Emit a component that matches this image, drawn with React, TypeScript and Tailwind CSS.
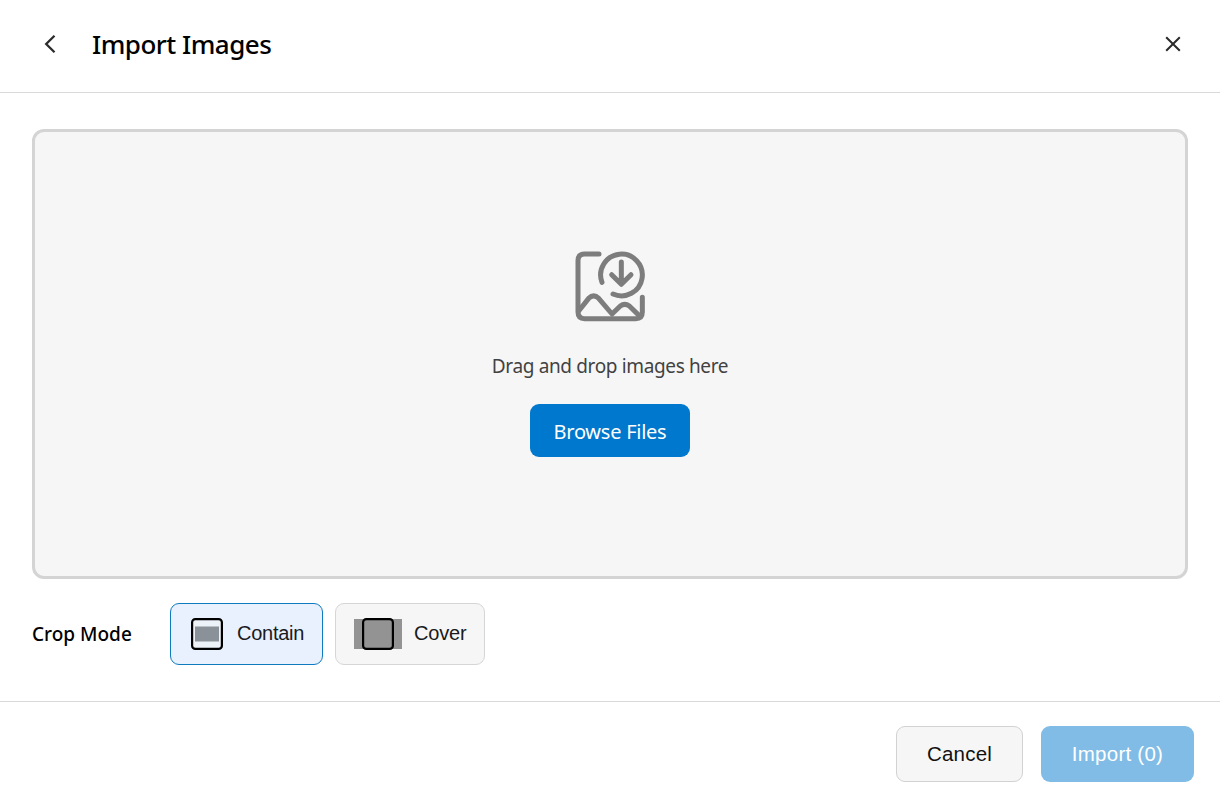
import React from "react";

function ImportIcon() {
  return (
    <svg className="h-[95px] w-[100px]" viewBox="0 0 300 285" fill="none" stroke="#7d7d7d" strokeWidth="15" strokeLinecap="round" strokeLinejoin="round">
      <path d="M117 42H74Q54 42 54 62V216Q54 236 74 236H227Q247 236 247 216V172" />
      <path d="M56 213L86 175Q101 160 116 175L156 222L181 198Q194 188 208 198L240 229" />
      <path d="M126 127A62.5 62.5 0 1 1 159 162" />
      <path d="M184 66V132M155 104L184 133L213 104" />
    </svg>
  );
}

function Header() {
  return (
    <header className="flex h-[93px] items-center border-b border-[#d9d9d9] pr-[37px] pl-[40px] pb-[4px]">
      <button aria-label="Back" className="flex size-5 items-center justify-center">
        <svg className="size-5" viewBox="0 0 20 20" fill="none" stroke="#2b2b2b" strokeWidth="2.3">
          <path d="M14.5 1.8L6.2 10L14.5 18.2" />
        </svg>
      </button>
      <h1 className="ml-[32px] text-[26px] leading-8 font-[550] tracking-[-0.5px] text-black">Import Images</h1>
      <button aria-label="Close" className="ml-auto flex size-5 items-center justify-center">
        <svg className="size-5" viewBox="0 0 20 20" fill="none" stroke="#2b2b2b" strokeWidth="2">
          <path d="M3.2 3.2L16.8 16.8M16.8 3.2L3.2 16.8" />
        </svg>
      </button>
    </header>
  );
}

export default function App() {
  return (
    <div className="flex h-[801px] w-[1220px] flex-col overflow-hidden bg-white font-['Segoe_UI','Noto_Sans',sans-serif]">
      <Header />
      <main className="flex h-[608px] flex-col px-8 pt-9">
        <section className="flex h-[450px] flex-col items-center rounded-[12px] border-[3px] border-[#d4d4d4] bg-[#f6f6f6] pt-[108px]">
          <ImportIcon />
          <p className="mt-[17px] text-[19px] leading-7 tracking-[-0.36px] whitespace-nowrap text-[#424242]">Drag and drop images here</p>
          <button className="mt-[24px] h-[53px] w-[160px] rounded-[9px] bg-[#0078cd] pt-[2px] text-[20px] leading-7 tracking-[-0.25px] text-white">Browse Files</button>
        </section>
        <section className="mt-6 flex h-[62px] items-center">
          <h2 className="w-[138px] text-[19px] leading-7 font-medium whitespace-nowrap text-black">Crop Mode</h2>
          <button className="flex h-[62px] w-[153px] items-center rounded-[9px] border border-[#0f7abf] bg-[#e9f1fe] pl-5 font-['Liberation_Sans',sans-serif] text-[20px] text-[#1a1a1f]">
            <svg className="size-8" viewBox="0 0 32 32">
              <rect x="1.1" y="1.1" width="29.8" height="29.8" rx="3.2" fill="#edf1f8" stroke="#000" strokeWidth="2.2" />
              <rect x="4" y="8.5" width="24" height="15" fill="#8b9198" />
            </svg>
            <span className="ml-[14px] pb-[2px] leading-7 tracking-[-0.25px]">Contain</span>
          </button>
          <button className="ml-3 flex h-[62px] w-[150px] items-center rounded-[9px] border border-[#d6d6d6] bg-[#f6f6f6] pl-[18px] font-['Liberation_Sans',sans-serif] text-[20px] text-[#1a1a1a]">
            <svg className="h-8 w-12" viewBox="0 0 48 32">
              <path d="M0 1H48V31H0Z" fill="#939393" />
              <rect x="9.1" y="1.1" width="29.8" height="29.8" rx="3.2" fill="#939393" stroke="#000" strokeWidth="2.2" />
            </svg>
            <span className="ml-[12px] pb-[2px] leading-7 tracking-[-0.2px]">Cover</span>
          </button>
        </section>
      </main>
      <footer className="flex h-[100px] items-start justify-end gap-[18px] border-t border-[#d9d9d9] pt-6 pr-[26px] font-['Liberation_Sans',sans-serif] text-[20.5px]">
        <button className="h-14 w-[127px] rounded-[9px] border border-[#d2d2d2] bg-[#f6f6f6] tracking-[0.2px] text-[#111]">Cancel</button>
        <button className="h-14 w-[153px] rounded-[9px] bg-[#80bce5] tracking-[0.25px] text-white">Import (0)</button>
      </footer>
    </div>
  );
}
